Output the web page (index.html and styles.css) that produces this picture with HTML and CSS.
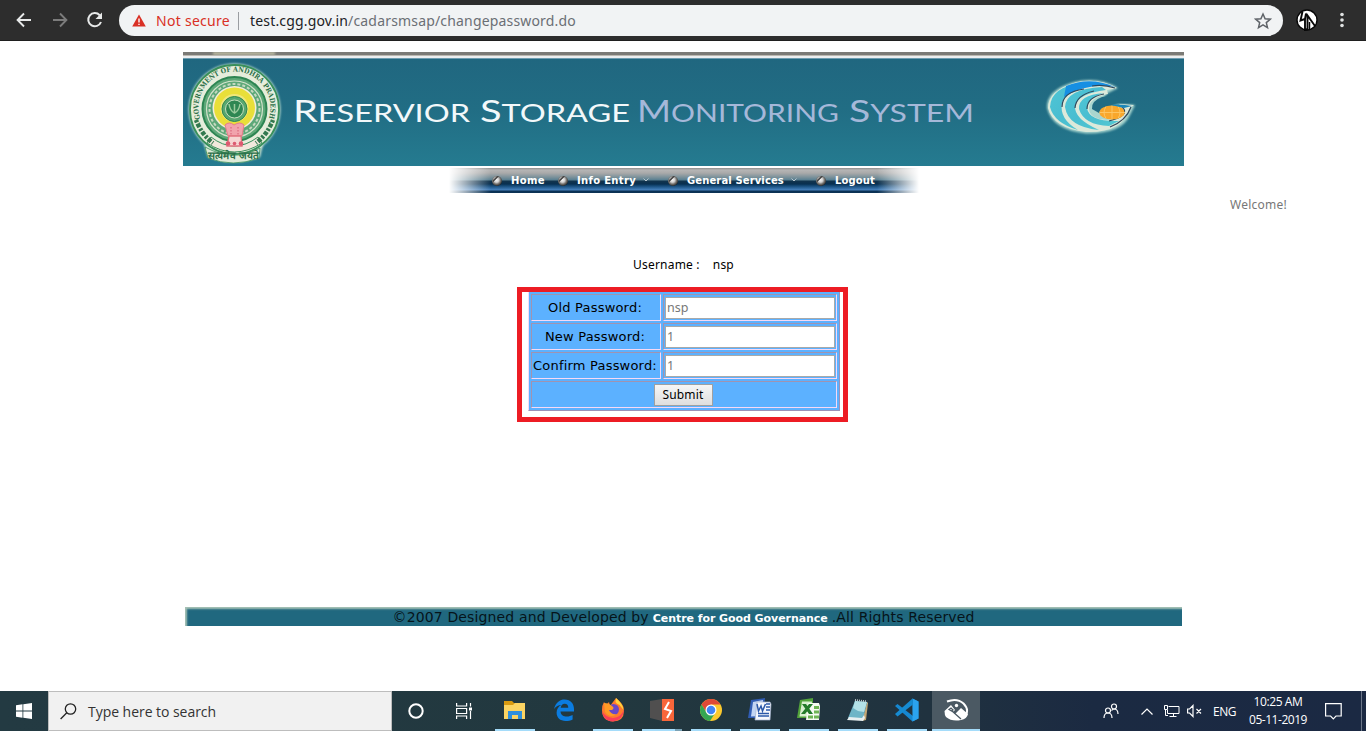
FILE: index.html
```
<!DOCTYPE html>
<html lang="en">
<head>
<meta charset="utf-8">
<title>Reservior Storage Monitoring System</title>
<link rel="stylesheet" href="styles.css">
</head>
<body>
<header class="browser">
  <svg class="nav-icons" width="119" height="40" viewBox="0 0 119 40" fill="none" stroke-width="1.9">
    <path d="M31 20H18M24 13.5L17.6 20l6.4 6.5" stroke="#e8eaea"/>
    <path d="M53 20H66M60 13.5l6.4 6.500-6.400 6.500" stroke="#7c7c7c"/>
    <path d="M99.700 15.200A6.600 6.600 0 1 0 101 22" stroke="#e8eaea" stroke-width="2"/>
    <path d="M102 12.500v6.500h-6.500z" fill="#e8eaea"/>
  </svg>
  <div class="omnibox">
    <svg class="warn" width="14" height="13" viewBox="0 0 14 13"><path d="M7 .5L13.800 12.500H.2z" fill="#d93025"/><path d="M7 4.500v4M7 9.700v1.400" stroke="#fff" stroke-width="1.400"/></svg>
    <span class="insecure">Not secure</span>
    <span class="divider"></span>
    <span class="url">test.cgg.gov.in<span class="path">/cadarsmsap/changepassword.do</span></span>
    <svg class="star" width="18" height="18" viewBox="0 0 18 18"><path d="M9 2l2.100 4.700 5.100.5-3.900 3.400 1.200 5L9 12.900l-4.500 2.700 1.200-5-3.900-3.400 5.100-.5z" fill="none" stroke="#5f6368" stroke-width="1.500"/></svg>
  </div>
  <svg class="profile" width="22" height="22" viewBox="0 0 22 22"><circle cx="11" cy="11" r="10" fill="#fff" stroke="#080808" stroke-width="1.400"/><path d="M6.500 2.500L4.500 11.500l4.500-1.500 1-5.500M9 10v11l2.500-1V6.500l7.500 10.500" fill="none" stroke="#080808" stroke-width="1.900"/><path d="M13.500 13v8" stroke="#080808" stroke-width="1.500"/></svg>
  <svg class="dots" width="4" height="18" viewBox="0 0 4 18" fill="#e0e2e2"><circle cx="2" cy="3.500" r="1.800"/><circle cx="2" cy="9" r="1.800"/><circle cx="2" cy="14.500" r="1.800"/></svg>
</header>

<main class="page">
  <svg class="banner" width="1001" height="114" viewBox="183 52 1001 114">
    <defs>
      <linearGradient id="teal" x2="0" y2="1"><stop offset="0" stop-color="#20667f"/><stop offset=".5" stop-color="#216d84"/><stop offset="1" stop-color="#257b90"/></linearGradient>
      <linearGradient id="wave" x2="1" y2="1"><stop offset="0" stop-color="#4fc6d6"/><stop offset=".5" stop-color="#49bdd0"/><stop offset="1" stop-color="#54c9d2"/></linearGradient>
      <filter id="glow" x="-20%" y="-20%" width="140%" height="140%"><feGaussianBlur stdDeviation="1.200"/></filter>
      <path id="ring-top" d="M202 123A36 36 0 1 1 267 123"/>
    </defs>
    <path d="M183 52h1001v114H183z" fill="url(#teal)"/>
    <path d="M183 52h1001v3H183z" fill="#7b7a76"/>
    <path d="M213 52h62v3h-62z" fill="#b8b69e" filter="url(#glow)"/>
    <path d="M183 55h1001v1H183z" fill="#bcb8b0"/>
    <path d="M183 56h1001v2H183z" fill="#eceef0"/>
    <path d="M183 58h1001v1H183z" fill="#6d9caf"/>

    <g>
      <circle cx="234.500" cy="109.500" r="46" fill="#b9ddd0" filter="url(#glow)"/>
      <path d="M204 144l4 13q26 10 52 0l3-13z" fill="#d4e8d6" filter="url(#glow)"/>
      <circle cx="234.500" cy="109.500" r="44.500" fill="#e6eddb" stroke="#398f5b" stroke-width="1.800"/>
      <circle cx="234.500" cy="109" r="32" fill="#5da878" stroke="#2d8552" stroke-width="2"/>
      <circle cx="234.500" cy="109" r="28" fill="none" stroke="#d4e2cc" stroke-width="1.200"/>
      <circle cx="234.500" cy="109" r="25" fill="none" stroke="#c5d8bf" stroke-width="2" stroke-dasharray="3 2"/>
      <circle cx="234.500" cy="108" r="22" fill="#f2eddb"/>
      <circle cx="234.500" cy="108" r="20.500" fill="#e9df39"/>
      <circle cx="234.500" cy="108" r="14" fill="#f0e77a"/>
      <circle cx="234.500" cy="109" r="12.500" fill="#58a770" stroke="#2b8750"/>
      <circle cx="234.500" cy="109" r="9" fill="#2e8752" stroke="#c8dfc0"/>
      <path d="M229 104q1 7 5.500 9q4.500-2 5.500-9M234.500 104v8" fill="none" stroke="#9acb9d" stroke-width="1.500"/>
      <path d="M211 137q23 18 47 0l4 6q-28 18-55 0z" fill="#f2e8dc" stroke="#398f5b"/>
      <path d="M225 125q4-4 9 0q6-4 10 0l-2 11h-14z" fill="#f1a3ac" stroke="#e57c8a"/>
      <path d="M229 136h12l1 10h-15z" fill="#f6d5d2" stroke="#e2727f" stroke-width="1.300"/>
      <path d="M231 127v8M238 127v8" stroke="#d65d72" stroke-dasharray="1.500 1.500"/>
      <circle cx="228" cy="143.500" r="2.300" fill="#dd5a70"/><circle cx="241" cy="143.500" r="2.300" fill="#dd5a70"/><circle cx="234.500" cy="143.500" r="1.800" fill="#dd5a70"/>
      <path d="M205 147q29 16 55 1l-1 10q-26 10-51 0z" fill="#deead7" stroke="#398f5b" stroke-width=".8"/>
      <text class="ring"><textPath href="#ring-top" textLength="144" lengthAdjust="spacingAndGlyphs">· GOVERNMENT OF ANDHRA PRADESH ·</textPath></text>
      <text class="ring deva" x="208" y="159" textLength="51" lengthAdjust="spacingAndGlyphs">सत्यमेव जयते</text>
      <path d="M196 120q6 15 17 23M273 120q-6 15-17 23" fill="none" stroke="#33794f" stroke-width="4.500" stroke-dasharray="2.500 1.300 4 1.500"/>
    </g>

    <g class="title">
      <text x="293" y="122" fill="#f2f8fa" textLength="177" lengthAdjust="spacingAndGlyphs">R<tspan class="sc">ESERVIOR</tspan></text>
      <text x="480" y="122" fill="#f2f8fa" textLength="150" lengthAdjust="spacingAndGlyphs">S<tspan class="sc">TORAGE</tspan></text>
      <text x="637" y="122" fill="#a5b8d9" textLength="202" lengthAdjust="spacingAndGlyphs">M<tspan class="sc">ONITORING</tspan></text>
      <text x="849" y="122" fill="#a5b8d9" textLength="125" lengthAdjust="spacingAndGlyphs">S<tspan class="sc">YSTEM</tspan></text>
    </g>

    <g>
      <path d="M1118 88Q1098 76 1074 82Q1046 90 1047 108Q1052 130 1086 133.500Q1122 134 1130 115L1135 105L1118 104L1100 112L1106 94z" fill="#a9d6cf" filter="url(#glow)"/>
      <path d="M1117 88Q1100 78 1077 82Q1048 90 1048 108Q1053 128 1086 132Q1123 133 1129 109L1134 105L1119 104Q1130 116 1107 120Q1089 119 1089 108Q1090 97 1108 94L1107 90Z" fill="#dce9da"/>
      <path d="M1102 97Q1091 101 1092 109L1099 113Q1101 105 1119 103L1130 103L1112 95z" fill="#216c83"/>
      <path d="M1084 83Q1051 86 1050 107Q1054 123 1078 130Q1059 119 1062 103Q1067 90 1091 86z" fill="url(#wave)"/>
      <path d="M1102 87Q1066 89 1065 107Q1068 127 1099 130Q1074 119 1075 106Q1079 93 1106 90z" fill="url(#wave)"/>
      <path d="M1104 93Q1078 95 1079 109Q1084 125 1109 126L1119 121Q1089 122 1087 108Q1089 97 1104 93z" fill="url(#wave)"/>
      <path d="M1066 86Q1090 76 1115 87Q1100 84 1085 88Q1078 89 1064 97z" fill="#168fe3"/>
      <path d="M1084 89Q1062 92 1062 107M1094 91Q1076 95 1075 108M1104 94Q1087 97 1087 109M1131 107Q1126 121 1110 127M1122 107Q1131 115 1109 121M1115 88Q1103 84 1092 86" fill="none" stroke="#30485c" stroke-width="1.200"/>
      <ellipse cx="1112" cy="112.500" rx="12.500" ry="7" fill="#f9a72b"/>
      <path d="M1100 112.500h25M1112 105.500v14M1106 106.500q-4 6 0 12M1118 106.500q4 6 0 12" fill="none" stroke="#fdc869" stroke-width=".9"/>
      <path d="M1111 105Q1120 103.500 1132 106L1124 108z" fill="#1b87b8"/>
    </g>
  </svg>

  <nav class="menu">
    <a class="item home"><i class="bullet"></i>Home</a>
    <a class="item info"><i class="bullet"></i>Info Entry<svg class="caret" width="6" height="4" viewBox="0 0 6 4"><path d="M.5.500L3 3 5.500.5"/></svg></a>
    <a class="item services"><i class="bullet"></i>General Services<svg class="caret" width="6" height="4" viewBox="0 0 6 4"><path d="M.5.500L3 3 5.500.5"/></svg></a>
    <a class="item logout"><i class="bullet"></i>Logout</a>
  </nav>

  <p class="welcome">Welcome!</p>
  <p class="user"><span>Username :</span><span>nsp</span></p>

  <section class="form-wrap">
    <form class="form">
      <label class="cell name">Old Password:</label><div class="cell field"><input class="input" value="nsp"></div>
      <label class="cell name">New Password:</label><div class="cell field"><input class="input" value="1"></div>
      <label class="cell name">Confirm Password:</label><div class="cell field"><input class="input" value="1"></div>
      <div class="cell full"><button class="submit" type="button">Submit</button></div>
    </form>
  </section>

  <footer class="footer"><span>©2007 Designed and Developed by</span><b>Centre for Good Governance</b><span>.All Rights Reserved</span></footer>
</main>

<div class="taskbar">
  <div class="start"><svg width="16" height="16" viewBox="0 0 16 16" fill="#fff"><path d="M0 2.300l6.500-1v6.200H0zM7.300 1.200L16 0v7.500H7.300zM0 8.500h6.500v6.200L0 13.700zM7.300 8.500H16V16l-8.700-1.200z"/></svg></div>
  <div class="search"><svg width="17" height="17" viewBox="0 0 17 17" fill="none" stroke="#222" stroke-width="1.300"><circle cx="10.500" cy="6" r="5.200"/><path d="M6.800 9.700L.6 16"/></svg><span>Type here to search</span></div>
  <div class="sys"><svg width="16" height="16" viewBox="0 0 16 16"><circle cx="8" cy="8" r="6.700" fill="none" stroke="#fff" stroke-width="2"/></svg></div>
  <div class="sys"><svg width="16" height="16" viewBox="0 0 16 16" fill="none" stroke="#fff" stroke-width="1.200"><path d="M.6 0v3h10V0M.6 16v-3h10v3M.6 5.500h10v5H.6zM14.500 0v3.500M14.500 8v8"/><path d="M13 4.500h3v3h-3z" fill="#fff" stroke="none"/></svg></div>
  <div class="apps">
    <div class="app on"><svg width="24" height="24" viewBox="0 0 24 24"><path d="M1 3h8l2 2h11v4H1z" fill="#d99a10"/><path d="M1 7h9l2-2h10v16H1z" fill="#fcd462"/><path d="M5 21v-8h14v8h-4v-4H9v4z" fill="#2f8fdc"/></svg></div>
    <div class="app"><svg width="24" height="24" viewBox="0 0 24 24"><path d="M2 11C4 4 8 1.500 12.500 1.500 19 1.500 22 6 22 11v2.500H8.500c.3 3.800 3.300 5 6.300 5 2.300 0 4.200-.6 5.800-1.500v4.500c-2 1-4.200 1.500-7 1.500-5.500 0-9-3.300-9-8.200 0-3.500 1.700-6.300 4.700-7.800C6.500 7.300 4 8 2 11zm6.700-1.300h7.600c0-2.800-1.400-4-3.600-4s-3.500 1.500-4 4z" fill="#0b7ce0"/></svg></div>
    <div class="app on"><svg width="24" height="24" viewBox="0 0 24 24"><path d="M15 0q6 5 7.500 9Q25 23 12 23.500 1 23 1 12q0-5 2-8l2 3 3-3 1 4z" fill="#ff7a2d"/><path d="M15 0q7 6 7.500 12l-4-5q-3-1-4-3z" fill="#ffd43a"/><path d="M1 13q1 10 11 10.500 10-1 11-12-3 8-11 8.500Q4 19 1 13z" fill="#fa3f58"/><circle cx="12.500" cy="11.500" r="5.500" fill="#6848c8"/><path d="M3 5q5 0 8 3 3 2 0 4H8q2 5 8 4-7 5-12-2z" fill="#ff9b25"/></svg></div>
    <div class="app on split"><svg width="24" height="24" viewBox="0 0 24 24"><path d="M0 3l12-2v22L0 20z" fill="#504f4f"/><path d="M12 1h12v22H12z" fill="#f8663a"/><path d="M19 4l-4 7 6 2-4 7" fill="none" stroke="#fff" stroke-width="2"/></svg></div>
    <div class="app on"><svg width="24" height="24" viewBox="0 0 24 24"><circle cx="12" cy="12" r="11" fill="#fbc92e"/><path d="M2.500 6.500A11 11 0 0 1 21.500 6.500H12L7.500 14.500z" fill="#df4937"/><path d="M2.500 6.500A11 11 0 0 0 11 23l5.500-8.500H7.500z" fill="#35a652"/><circle cx="12" cy="12" r="5.500" fill="#fff"/><circle cx="12" cy="12" r="4.300" fill="#4285f4"/></svg></div>
    <div class="app on"><svg width="24" height="24" viewBox="0 0 24 24"><path d="M3 2L17 0l-2 20L0 20z" fill="#315db4"/><path d="M5 4l10-2-1 16-11 .5z" fill="#c3d5f3"/><path d="M9 4h13l1 2-1 16H7z" fill="#f6f8fd" stroke="#a5b3cf" stroke-width=".7"/><path d="M9 6l1.500 7 2.500-5 1.500 5 3-7M18 6h4M18 9h4M18 12h4M10 15.500h11M10 18h11" fill="none" stroke="#2b58a9" stroke-width="1.500"/></svg></div>
    <div class="app on"><svg width="24" height="24" viewBox="0 0 24 24"><path d="M3 2l13-2v4l-2 16H0z" fill="#53a43b"/><path d="M5 3.500h10l-1 15H2.500z" fill="#d8efcf"/><path d="M11 5h11l1 3-1 14H9z" fill="#f6faf2"/><path d="M5 6h4l7 10h-4zM12 6h4L8 16H4z" fill="#237b2a"/><path d="M17 8h5v3h-5zM17 12.500h5v3h-5zM11 17.500h5v3h-5zM17 17.500h5v3h-5z" fill="#6fb554"/></svg></div>
    <div class="app on"><svg width="24" height="24" viewBox="0 0 24 24"><path d="M21 4l1 1-2 17-4 1z" fill="#c4a775"/><path d="M9 3l12 1-4 17-15-1z" fill="#6fb5c7"/><path d="M9 3l12 1-3 10-6-1-5-3z" fill="#b3e1e7"/><path d="M3 19l13 1 2-3 1 3-2 3-16-1z" fill="#e8eff0"/><path d="M9 2l12 1.500" stroke="#c1cbcc" stroke-width="2" stroke-dasharray="1 1"/></svg></div>
    <div class="app on"><svg width="24" height="24" viewBox="0 0 24 24"><path d="M17.500.5l6 3v17l-6 3L0 8l2.500-2L18 18z" fill="#1687d0"/><path d="M17.500.5l6 3v17l-6 3z" fill="#2ba3ef"/><path d="M17.500.5L0 16l2.500 2.500L18 6.500z" fill="#168bd2"/></svg></div>
    <div class="app on active"><svg width="26" height="24" viewBox="0 0 26 24"><path d="M4 3.500Q14-.5 20.500 5.500 26 11 23 17" fill="none" stroke="#fff" stroke-width="2"/><path d="M1.500 13L8 7l4 5-2 2 2 2 6-6 7 6q-1 5-7 6-9 2-15-3-1.500-2-1.500-6z" fill="#fff"/><path d="M6 11.500l2-1.500 2 2-1.500 1zM9 13l9 8" fill="none" stroke="#4b5963" stroke-width="1.300"/><circle cx="13.500" cy="7.500" r="1.700" fill="#fff"/></svg></div>
  </div>
  <div class="tray">
    <svg class="people" width="16" height="16" viewBox="0 0 16 16" fill="none" stroke="#fff" stroke-width="1.200"><circle cx="5" cy="7.500" r="2.500"/><path d="M1 15q0-5 4-5t4 5"/><circle cx="11" cy="3.500" r="2.500"/><path d="M8.500 7.500Q10 6 11 6q4 0 4 5"/></svg>
    <svg class="up" width="12" height="7" viewBox="0 0 12 7" fill="none" stroke="#fff" stroke-width="1.200"><path d="M.5 6.500L6 1l5.500 5.500"/></svg>
    <svg class="net" width="17" height="14" viewBox="0 0 17 14" fill="none" stroke="#fff"><path d="M5.500 2.500h10.500v7H4.500V6M10.500 9.500V13M6.500 12.500H13.500M1.500 1.500h3v4h-3zM2.500 5.500V11.500H5"/></svg>
    <svg class="vol" width="15" height="14" viewBox="0 0 15 14" fill="none" stroke="#fff" stroke-width="1.200"><path d="M.6 5v4h2L6 12.500v-11L2.600 5zM9.500 5l4.500 4.500M14 5L9.500 9.500"/></svg>
    <span class="lang">ENG</span>
    <div class="clock"><span>10:25 AM</span><span class="date">05-11-2019</span></div>
    <svg class="note" width="17" height="17" viewBox="0 0 17 17" fill="none" stroke="#fff" stroke-width="1.200"><path d="M.6.600h15.600v12.400H11L8.300 15.800 5.600 13H.6z"/></svg>
    <span class="peek"></span>
  </div>
</div>
</body>
</html>
```
FILE: styles.css
```
* { box-sizing: border-box; }
body {
  margin: 0;
  height: 731px;
  display: flex;
  flex-direction: column;
  overflow: hidden;
  background: #fff;
  font-family: "Noto Sans", sans-serif;
  white-space: nowrap;
}
svg { display: block; flex: none; }
p { margin: 0; }

/* Browser toolbar */
.browser {
  height: 41px;
  flex: none;
  display: flex;
  background: #2d2d2d;
  border-bottom: 1px solid #1f1f1f;
}
.omnibox {
  width: 1164px;
  height: 31px;
  margin-top: 5px;
  padding-left: 13px;
  border-radius: 16px;
  background: #f1f3f4;
  display: flex;
  align-items: center;
  font-size: 14px;
}
.insecure { margin-left: 10px; width: 74px; color: #d93025; letter-spacing: .28px; }
.divider { width: 1px; height: 18px; margin: 0 11px 0 8px; background: #9a9da1; }
.url { color: #202124; letter-spacing: .17px; }
.path { color: #6b6f74; }
.star { margin-left: auto; margin-right: 11px; }
.profile { margin: 9px 0 0 13px; }
.dots { margin: 11px 0 0 22px; }

/* Page */
.page {
  height: 650px;
  flex: none;
  padding-top: 11px;
  display: flex;
  flex-direction: column;
  align-items: center;
}
.title { font: 30px Lato, sans-serif; }
.sc { font-size: 24.5px; }
.ring { font: bold 7px "DejaVu Serif", serif; fill: #2c7049; }
.deva { font-size: 10px; }

.menu {
  width: 470px;
  height: 25px;
  margin: 2px 0 0 2px;
  padding-left: 43px;
  display: flex;
  background:
    linear-gradient(90deg, #fff 0, rgba(255,255,255,0) 42px, rgba(255,255,255,0) 428px, #fff 100%),
    linear-gradient(#8c8c8c 0, #b5b5b5 2px, #aaa 5px, #7d929b 9px, #587f91 12px, #12344d 13px, #082f50 16px, #174c7a 18px, #3974ae 21px, #4a83bd 22px, #0a3155 23px, #0c3355 100%);
  color: #fff;
  font: bold 10px/25px "DejaVu Sans", sans-serif;
}
.item { display: flex; align-items: center; }
.home { width: 66px; letter-spacing: .38px; }
.info { width: 110px; letter-spacing: .33px; }
.services { width: 148px; letter-spacing: .12px; }
.logout { letter-spacing: .14px; }
.bullet {
  width: 10px;
  height: 10px;
  margin: 1px 9px 0 0;
  border-radius: 50%;
  background: linear-gradient(135deg, transparent 30%, #444 38%, #444 48%, transparent 56%) 1px 0 / 6px 6px no-repeat,
    radial-gradient(circle at 45% 40%, #f5f5f5 0, #d2d2d2 28%, #77736f 50%, #252525 75%);
}
.caret { margin: -1px 0 0 7px; fill: none; stroke: #b9c6ce; }

.welcome {
  align-self: flex-end;
  margin: 3px 79px 0 0;
  font-size: 12px;
  line-height: 18px;
  letter-spacing: .24px;
  color: #777;
}
.user {
  display: flex;
  gap: 13px;
  margin: 42px 0 0 1px;
  font-size: 12px;
  line-height: 18px;
  letter-spacing: .2px;
}

/* Password form */
.form-wrap {
  width: 331px;
  height: 135px;
  margin: 13px 0 0 -1px;
  border: 5px solid #ed1c24;
  display: flex;
  padding-left: 6px;
  align-items: flex-start;
}
.form {
  width: 312px;
  height: 119px;
  padding: 2px;
  display: grid;
  grid-template-columns: 130px 174px;
  grid-template-rows: repeat(4, 27px);
  gap: 2px;
  background: #5cb1ff;
  border: 1px solid #9a92b8;
  border-left-color: #f6d9f5;
  border-top: 0;
}
.cell {
  border: 1px solid;
  border-color: #a093b0 #f6d9f5 #f6d9f5 #a093b0;
  display: flex;
  align-items: center;
  justify-content: center;
  font: 13px "DejaVu Sans", sans-serif;
  letter-spacing: .2px;
}
.name { padding-right: 2px; }
.field { justify-content: flex-start; padding-left: 1px; }
.full { grid-column: 1 / 3; padding-right: 2px; }
.input {
  width: 170px;
  height: 22px;
  padding: 0 1px;
  border: 1px solid #a9a9a9;
  outline: 0;
  background: #fff;
  color: #777;
  font: 12.500px "Noto Sans", sans-serif;
}
.submit {
  width: 59px;
  height: 22px;
  padding: 0;
  border: 1px solid #a0a0a0;
  border-radius: 0;
  background: linear-gradient(#f6f6f6, #dedede);
  color: #000;
  font: 12px "Noto Sans", sans-serif;
  letter-spacing: .16px;
}

.footer {
  width: 997px;
  height: 19px;
  margin-top: 185px;
  padding-left: 208px;
  display: flex;
  align-items: baseline;
  background: #20687f;
  box-shadow: inset 2px 2px 2px #a7c2b6;
  color: #06141a;
  font: 14px/20px "DejaVu Sans", sans-serif;
  letter-spacing: .14px;
}
.footer b { margin: 0 4px; color: #fff; font-size: 11px; letter-spacing: -.06px; }

/* Taskbar */
.taskbar {
  height: 40px;
  flex: none;
  display: flex;
  background: linear-gradient(90deg, #233a42 0, #22383f 45%, #20323f 68%, #1b2a42 80%, #1b2943 100%);
  color: #fff;
  font-family: "Open Sans", sans-serif;
}
.start, .sys { width: 48px; display: grid; place-items: center; }
.search {
  width: 344px;
  padding-left: 11px;
  display: flex;
  align-items: center;
  gap: 11px;
  background: #f1f1f1;
  border: 1px solid #bdbdbd;
  color: #333;
  font-size: 14px;
  line-height: 20px;
  letter-spacing: -.04px;
}
.search span { padding-top: 1px; }
.apps { display: flex; gap: 9px; margin-left: 7px; }
.app { width: 40px; display: grid; place-items: center; border-bottom: 2px solid transparent; }
.on { border-color: #a5dcfa; }
.split { border-image: linear-gradient(90deg, #a5dcfa 80%, #7ba2b5 80%) 2; border-width: 0 0 2px; }
.active { width: 48px; margin-left: -4px; background: #4b5963; }
.tray { display: flex; align-items: center; margin-left: auto; font-size: 12px; }
.up { margin-left: 22px; }
.net { margin-left: 10px; }
.vol { margin-left: 7px; }
.lang { width: 23px; margin-left: 11px; letter-spacing: -.48px; }
.clock {
  width: 58px;
  margin-left: 13px;
  display: flex;
  flex-direction: column;
  align-items: center;
  line-height: 18px;
  letter-spacing: -.4px;
}
.date { letter-spacing: -.46px; }
.note { margin-left: 18px; }
.peek { width: 1px; height: 40px; margin: 0 4px 0 19px; background: #6b7688; }
```
